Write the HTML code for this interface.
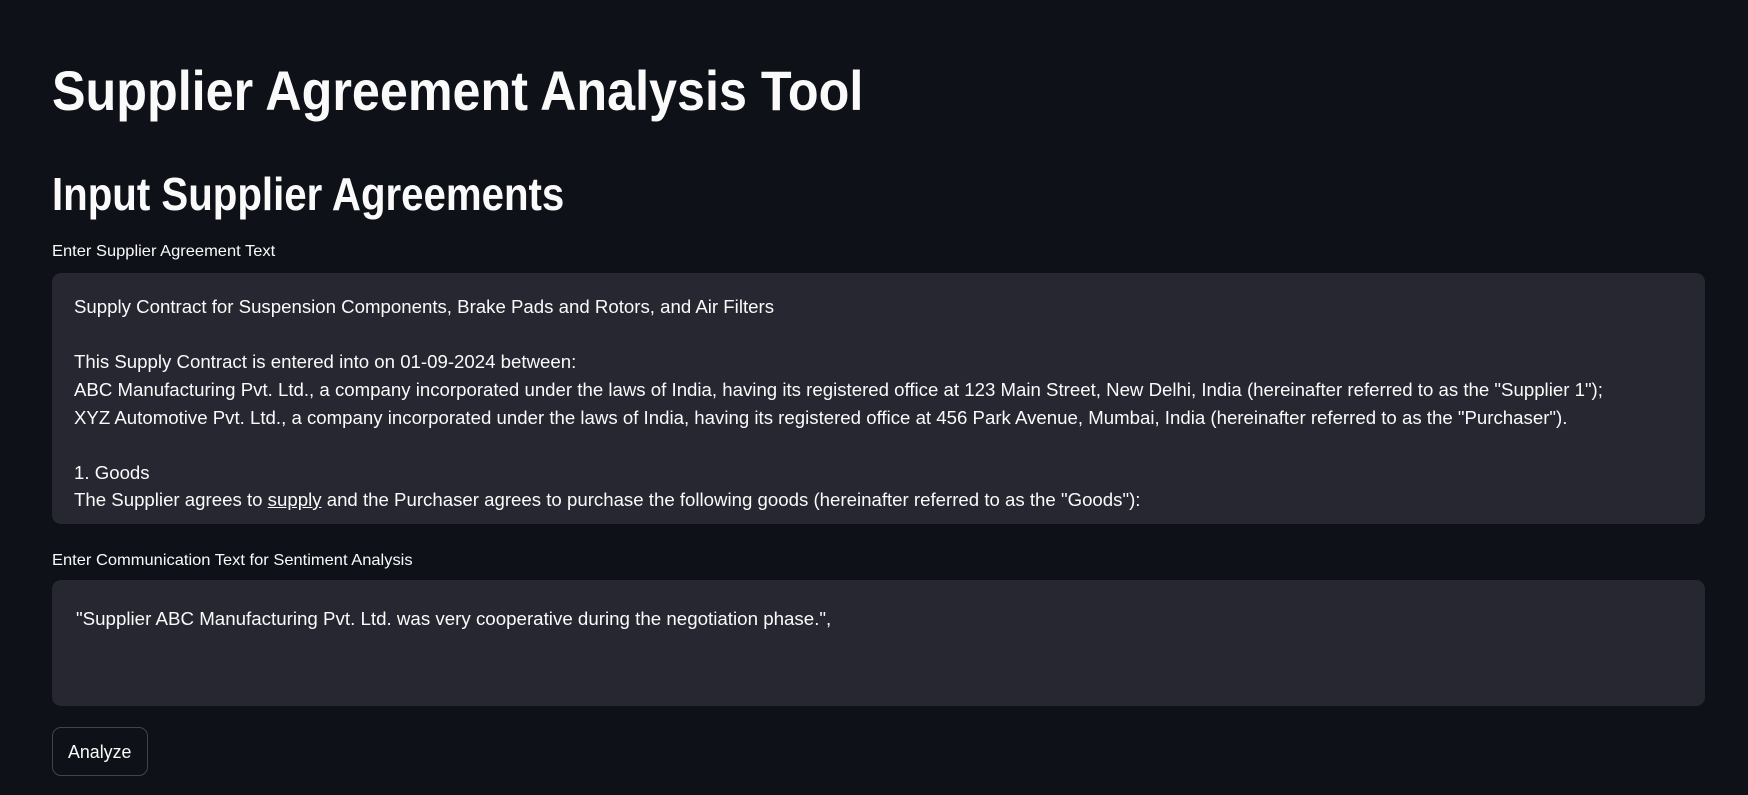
<!DOCTYPE html>
<html><head><meta charset="utf-8"><style>
html,body{margin:0;padding:0;background:#0e1117;width:1748px;height:795px;overflow:hidden;font-family:"Liberation Sans",sans-serif;color:#fafafa}
.t{position:absolute;white-space:nowrap;transform-origin:0 0}
.ta{position:absolute;left:52px;width:1653px;background:#262730;border-radius:9px}
.ln{position:absolute;left:22px;white-space:nowrap;font-size:18px;transform-origin:0 0;transform:scaleX(1.035)}
.btn{position:absolute;left:52px;top:727px;width:96px;height:49px;border:1px solid rgba(250,250,250,0.22);border-radius:9px;box-sizing:border-box}
</style></head><body>
<div class="t" style="left:52px;top:58px;font-size:56px;font-weight:bold;transform:scaleX(0.898)">Supplier Agreement Analysis Tool</div>
<div class="t" style="left:52px;top:167px;font-size:46px;font-weight:bold;transform:scaleX(0.874)">Input Supplier Agreements</div>
<div class="t" style="left:52px;top:243px;font-size:16px;transform:scaleX(1.03)">Enter Supplier Agreement Text</div>
<div class="ta" style="top:273px;height:251px">
 <div class="ln" style="top:24px">Supply Contract for Suspension Components, Brake Pads and Rotors, and Air Filters</div>
 <div class="ln" style="top:79px">This Supply Contract is entered into on 01-09-2024 between:</div>
 <div class="ln" style="top:107px">ABC Manufacturing Pvt. Ltd., a company incorporated under the laws of India, having its registered office at 123 Main Street, New Delhi, India (hereinafter referred to as the "Supplier 1");</div>
 <div class="ln" style="top:135px">XYZ Automotive Pvt. Ltd., a company incorporated under the laws of India, having its registered office at 456 Park Avenue, Mumbai, India (hereinafter referred to as the "Purchaser").</div>
 <div class="ln" style="top:190px">1. Goods</div>
 <div class="ln" style="top:217px">The Supplier agrees to <span style="text-decoration:underline">supply</span> and the Purchaser agrees to purchase the following goods (hereinafter referred to as the "Goods"):</div>
</div>
<div class="t" style="left:52px;top:552px;font-size:16px;transform:scaleX(1.03)">Enter Communication Text for Sentiment Analysis</div>
<div class="ta" style="top:580px;height:126px">
 <div class="ln" style="top:29px;left:24px;transform:scaleX(1.04)">"Supplier ABC Manufacturing Pvt. Ltd. was very cooperative during the negotiation phase.",</div>
</div>
<div class="btn"><div class="t" style="left:15px;top:14px;font-size:18px;transform:scaleX(0.99)">Analyze</div></div>
</body></html>
